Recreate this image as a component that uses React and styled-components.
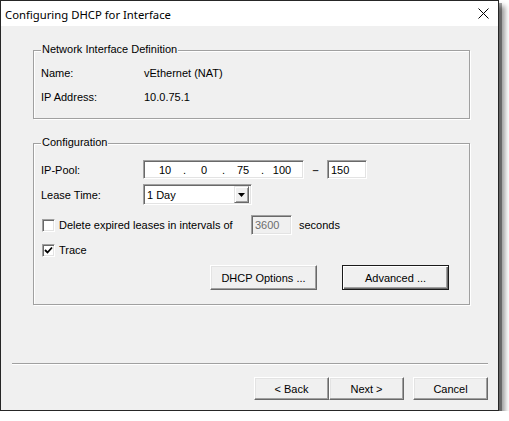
import React from 'react';
import styled, { createGlobalStyle } from 'styled-components';

const GlobalStyle = createGlobalStyle`
  html, body {
    margin: 0;
    padding: 0;
    background: #ffffff;
  }
  body {
    font-family: 'Liberation Sans', Arial, sans-serif;
    font-size: 11px;
    color: #000;
  }
  * {
    box-sizing: border-box;
  }
`;

const Window = styled.div`
  width: 499px;
  height: 411px;
  border: 1px solid #262626;
  background: #f0f0f0;
  display: flex;
  flex-direction: column;
  box-shadow: 3px 3px 0 rgba(0, 0, 0, 0.35), 6px 6px 5px rgba(0, 0, 0, 0.4);
`;

const TitleBar = styled.div`
  height: 25px;
  background: #ffffff;
  display: flex;
  align-items: center;
  justify-content: space-between;
  padding: 0 9px 0 4px;
  flex-shrink: 0;
`;

const Title = styled.span`
  font-family: 'Noto Sans', 'Open Sans', sans-serif;
  font-size: 11.3px;
  color: #000;
  margin-top: 1px;
`;

const Body = styled.div`
  flex: 1;
  display: flex;
  flex-direction: column;
`;

const Groups = styled.div`
  display: flex;
  flex-direction: column;
  gap: 24px;
  padding: 24px 28px 0 32px;
`;

const GroupBox = styled.div`
  position: relative;
  border: 1px solid #a0a0a0;
  box-shadow: inset 1px 1px 0 #ffffff, 1px 1px 0 #ffffff;
  padding: ${p => p.$padding};
  display: flex;
  flex-direction: column;
`;

const Legend = styled.span`
  position: absolute;
  top: -8px;
  left: 7px;
  padding: 0 1px;
  line-height: 13px;
  background: #f0f0f0;
`;

const InfoRow = styled.div`
  display: grid;
  grid-template-columns: 103px 1fr;
  line-height: 13px;
  height: 13px;
  margin-top: ${p => p.$mt || 0}px;
`;

const Row = styled.div`
  display: flex;
  align-items: center;
  height: ${p => p.$h}px;
  margin-top: ${p => p.$mt}px;
  justify-content: ${p => p.$end ? 'flex-end' : 'flex-start'};
  gap: ${p => p.$gap || 0}px;
  padding-right: ${p => p.$pr || 0}px;
`;

const FieldLabel = styled.span`
  width: 102px;
  flex-shrink: 0;
`;

const Sunken = styled.div`
  height: ${p => p.$h}px;
  width: ${p => p.$w}px;
  border: 1px solid;
  border-color: #a0a0a0 #ffffff #ffffff #a0a0a0;
  box-shadow: inset 1px 1px 0 #696969, inset -1px -1px 0 #e3e3e3;
  background: ${p => p.$disabled ? '#f0f0f0' : '#ffffff'};
  color: ${p => p.$disabled ? '#6d6d6d' : '#000'};
  display: flex;
  align-items: center;
  padding-left: ${p => p.$pl || 0}px;
  flex-shrink: 0;
`;

const Octet = styled.span`
  width: 30px;
  text-align: center;
`;

const Dot = styled.span`
  width: 9px;
  text-align: center;
`;

const Dash = styled.span`
  width: 23px;
  text-align: center;
  font-weight: bold;
  color: #333;
`;

const Combo = styled(Sunken)`
  justify-content: space-between;
  padding: 2px 2px 2px 3px;
`;

const ComboButton = styled.span`
  width: 15px;
  height: 17px;
  background: #f0f0f0;
  border: 1px solid;
  border-color: #e3e3e3 #696969 #696969 #e3e3e3;
  box-shadow: inset 1px 1px 0 #ffffff, inset -1px -1px 0 #a0a0a0;
  display: flex;
  align-items: center;
  justify-content: center;
`;

const Check = styled.span`
  width: 13px;
  height: 13px;
  margin-left: 1px;
  border: 1px solid;
  border-color: #a0a0a0 #ffffff #ffffff #a0a0a0;
  box-shadow: inset 1px 1px 0 #696969, inset -1px -1px 0 #e3e3e3;
  background: #ffffff;
  display: flex;
  align-items: center;
  justify-content: center;
  flex-shrink: 0;
`;

const CheckText = styled.span`
  margin-left: 4px;
  width: ${p => p.$w ? `${p.$w}px` : 'auto'};
  flex-shrink: 0;
`;

const Suffix = styled.span`
  margin-left: 7px;
`;

const Button = styled.button`
  font-family: inherit;
  font-size: 11px;
  color: #000;
  width: ${p => p.$w}px;
  height: ${p => p.$h}px;
  padding: 0;
  margin: 0;
  background: #f0f0f0;
  border: 1px solid;
  border-color: ${p => p.$default ? '#1a1a1a' : '#ffffff #696969 #696969 #ffffff'};
  box-shadow: ${p => p.$default
    ? 'inset 1px 1px 0 #ffffff, inset -1px -1px 0 #696969, inset -2px -2px 0 #a0a0a0'
    : 'inset -1px -1px 0 #a0a0a0, inset 1px 1px 0 #e3e3e3'};
  cursor: default;
`;

const Separator = styled.div`
  margin: 58px 10px 0 11px;
  height: 2px;
  border-top: 1px solid #a0a0a0;
  border-bottom: 1px solid #ffffff;
`;

const Footer = styled.div`
  display: flex;
  justify-content: flex-end;
  padding: 12px 10px 0 0;
`;

const WizardPair = styled.div`
  display: flex;
  margin-right: 9px;
`;

const CloseIcon = () => (
  <svg width="11" height="11" viewBox="0 0 11 11">
    <path d="M0.5 0.5 L10.5 10.5 M10.5 0.5 L0.5 10.5" stroke="#000" strokeWidth="1" />
  </svg>
);

const ArrowDown = () => (
  <svg width="7" height="4" viewBox="0 0 7 4">
    <path d="M0 0 H7 L3.5 4 Z" fill="#000" />
  </svg>
);

const CheckMark = () => (
  <svg width="9" height="9" viewBox="0 0 9 9">
    <path d="M1 4 L3.5 6.5 L8 1.5" stroke="#000" strokeWidth="1.8" fill="none" />
  </svg>
);

export default function App() {
  return (
    <>
      <GlobalStyle />
      <Window>
        <TitleBar>
          <Title>Configuring DHCP for Interface</Title>
          <CloseIcon />
        </TitleBar>
        <Body>
          <Groups>
            <GroupBox $padding="16px 0 14px 7px">
              <Legend>Network Interface Definition</Legend>
              <InfoRow>
                <span>Name:</span>
                <span>vEthernet (NAT)</span>
              </InfoRow>
              <InfoRow $mt={11}>
                <span>IP Address:</span>
                <span>10.0.75.1</span>
              </InfoRow>
            </GroupBox>

            <GroupBox $padding="0 0 14px 7px">
              <Legend>Configuration</Legend>
              <Row $h={19} $mt={16}>
                <FieldLabel>IP-Pool:</FieldLabel>
                <Sunken $w={161} $h={19} $pl={6}>
                  <Octet>10</Octet>
                  <Dot>.</Dot>
                  <Octet>0</Octet>
                  <Dot>.</Dot>
                  <Octet>75</Octet>
                  <Dot>.</Dot>
                  <Octet>100</Octet>
                </Sunken>
                <Dash>–</Dash>
                <Sunken $w={40} $h={19} $pl={3}>150</Sunken>
              </Row>
              <Row $h={21} $mt={5}>
                <FieldLabel>Lease Time:</FieldLabel>
                <Combo $w={109} $h={21}>
                  <span>1 Day</span>
                  <ComboButton>
                    <ArrowDown />
                  </ComboButton>
                </Combo>
              </Row>
              <Row $h={20} $mt={10}>
                <Check />
                <CheckText $w={192}>Delete expired leases in intervals of</CheckText>
                <Sunken $w={41} $h={20} $pl={3} $disabled>3600</Sunken>
                <Suffix>seconds</Suffix>
              </Row>
              <Row $h={20} $mt={5}>
                <Check>
                  <CheckMark />
                </Check>
                <CheckText>Trace</CheckText>
              </Row>
              <Row $h={25} $mt={5} $end $gap={25} $pr={20}>
                <Button $w={107} $h={25}>DHCP Options ...</Button>
                <Button $w={107} $h={25} $default>Advanced ...</Button>
              </Row>
            </GroupBox>
          </Groups>

          <Separator />

          <Footer>
            <WizardPair>
              <Button $w={75} $h={23}>&lt; Back</Button>
              <Button $w={75} $h={23}>Next &gt;</Button>
            </WizardPair>
            <Button $w={75} $h={23}>Cancel</Button>
          </Footer>
        </Body>
      </Window>
    </>
  );
}
